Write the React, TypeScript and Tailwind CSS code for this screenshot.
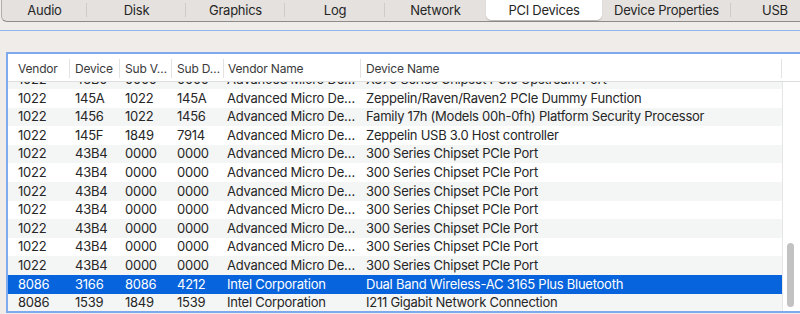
import React from "react";

const tabs = [
  { label: "Audio", w: 85 },
  { label: "Disk", w: 99 },
  { label: "Graphics", w: 99 },
  { label: "Log", w: 100 },
  { label: "Network", w: 101 },
  { label: "PCI Devices", w: 116, selected: true },
  { label: "Device Properties", w: 129 },
  { label: "USB", w: 88 },
];

const cols = [
  { label: "Vendor", w: 62, pl: 10 },
  { label: "Device", w: 50, pl: 5 },
  { label: "Sub V…", w: 52, pl: 5 },
  { label: "Sub D…", w: 52, pl: 5 },
  { label: "Vendor Name", w: 137, pl: 4 },
  { label: "Device Name", w: 421, pl: 5 },
];

const AMD = "Advanced Micro De…";
const rows: string[][] = [
  ["1022", "43B0", "0000", "0000", AMD, "X370 Series Chipset PCIe Upstream Port"],
  ["1022", "145A", "1022", "145A", AMD, "Zeppelin/Raven/Raven2 PCIe Dummy Function"],
  ["1022", "1456", "1022", "1456", AMD, "Family 17h (Models 00h-0fh) Platform Security Processor"],
  ["1022", "145F", "1849", "7914", AMD, "Zeppelin USB 3.0 Host controller"],
  ["1022", "43B4", "0000", "0000", AMD, "300 Series Chipset PCIe Port"],
  ["1022", "43B4", "0000", "0000", AMD, "300 Series Chipset PCIe Port"],
  ["1022", "43B4", "0000", "0000", AMD, "300 Series Chipset PCIe Port"],
  ["1022", "43B4", "0000", "0000", AMD, "300 Series Chipset PCIe Port"],
  ["1022", "43B4", "0000", "0000", AMD, "300 Series Chipset PCIe Port"],
  ["1022", "43B4", "0000", "0000", AMD, "300 Series Chipset PCIe Port"],
  ["1022", "43B4", "0000", "0000", AMD, "300 Series Chipset PCIe Port"],
  ["8086", "3166", "8086", "4212", "Intel Corporation", "Dual Band Wireless-AC 3165 Plus Bluetooth"],
  ["8086", "1539", "1849", "1539", "Intel Corporation", "I211 Gigabit Network Connection"],
];

export default function App() {
  return (
    <div
      className="w-[800px] h-[314px] overflow-hidden bg-[#efece9] text-[#262626]"
      style={{ fontFamily: "Inter, 'Liberation Sans', sans-serif" }}
    >
      {/* Tab bar */}
      <div className="h-[22px] overflow-hidden">
        <div className="flex w-[830px] h-[28px] -mt-[6px] ml-[1px] rounded-[6px] border border-[#b0adaa] border-b-[#8e8b88] bg-[#e4e1de]">
          {tabs.map((t, i) => {
            const next = tabs[i + 1];
            const showSep = !t.selected && next && !next.selected && i < tabs.length - 1;
            return (
              <div
                key={t.label}
                className="relative flex shrink-0 items-end justify-center pb-[3px]"
                style={{ width: t.w }}
              >
                {t.selected && (
                  <div className="absolute left-0 right-0 top-0 bottom-[1px] rounded-[5px] bg-white shadow-[0_0.5px_1px_rgba(0,0,0,0.2)]" />
                )}
                <span className="relative text-[13px] leading-[16px] tracking-[-0.25px]">{t.label}</span>
                {showSep && (
                  <div className="absolute right-0 bottom-[4px] h-[14px] w-px bg-[#cfcbc7]" />
                )}
              </div>
            );
          })}
        </div>
      </div>

      {/* Blue line */}
      <div className="h-[8px]" />
      <div className="h-px bg-[#8fb5ee]" />
      <div className="h-[21px]" />

      {/* Table */}
      <div className="ml-[6px] h-[261px] w-[796px] border-2 border-[#7ea9ec] bg-white flex flex-col">
        {/* Header */}
        <div className="flex h-[28px] shrink-0 items-center border-b border-[#dedede] bg-white text-[12px] tracking-[-0.2px] text-[#3a3a3a]">
          {cols.map((c, i) => (
            <div
              key={i}
              className="relative shrink-0 whitespace-nowrap overflow-hidden pt-[2px]"
              style={{ width: c.w, paddingLeft: c.pl }}
            >
              {c.label}
              <div className="absolute right-0 top-[1px] h-[19px] w-px bg-[#e3e3e3]" />
            </div>
          ))}
        </div>
        {/* Body */}
        <div className="relative flex-1 overflow-hidden">
          <div className="-mt-[11.5px]">
            {rows.map((r, i) => {
              const selected = i === 11;
              const bg = selected ? "bg-[#0864dc]" : i % 2 === 0 ? "bg-[#f4f5f5]" : "bg-white";
              return (
                <div key={i} className={`flex h-[18.6px] w-[774px] items-center text-[13px] tracking-[-0.25px] ${bg} ${selected ? "text-white" : ""}`}>
                  {r.map((cell, j) => (
                    <div
                      key={j}
                      className="shrink-0 whitespace-nowrap overflow-hidden"
                      style={{ width: cols[j].w, paddingLeft: j === 4 ? 3 : cols[j].pl }}
                    >
                      {cell}
                    </div>
                  ))}
                </div>
              );
            })}
          </div>
          {/* Scrollbar track */}
          <div className="absolute right-0 top-0 bottom-0 w-[18px] border-l border-[#e6e6e6] bg-white">
            <div className="absolute left-[4px] top-[161px] h-[64px] w-[7px] rounded-full bg-[#c2c2c2]" />
          </div>
        </div>
      </div>
    </div>
  );
}
